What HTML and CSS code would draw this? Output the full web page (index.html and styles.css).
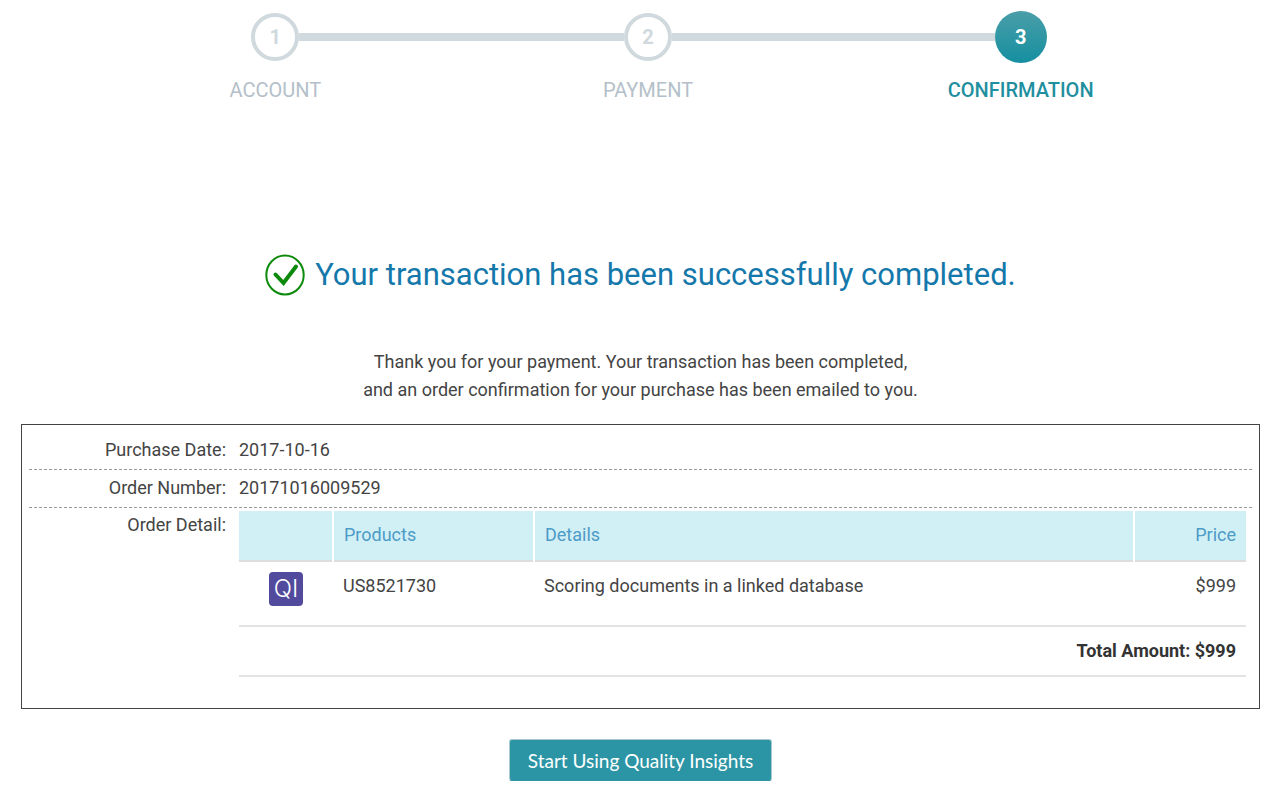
FILE: index.html
```html
<!DOCTYPE html>
<html lang="en">
  <head>
    <meta charset="UTF-8" />
    <meta name="viewport" content="width=device-width, initial-scale=1.0" />
    <title>Order Confirmation</title>
    <link rel="stylesheet" href="styles.css">
  </head>
  <body>
    <ol class="steps">
      <li class="step">
        <div class="marker"><span class="circle">1</span></div>
        <span class="step-name">ACCOUNT</span>
      </li>
      <li class="step">
        <div class="marker"><span class="circle">2</span></div>
        <span class="step-name">PAYMENT</span>
      </li>
      <li class="step active" aria-current="step">
        <div class="marker"><span class="circle">3</span></div>
        <span class="step-name">CONFIRMATION</span>
      </li>
    </ol>

    <main>
      <h1 class="title">
        <svg class="check" viewBox="0 0 40 42" aria-hidden="true">
          <ellipse cx="20" cy="21" rx="18.7" ry="19.5" />
          <path d="M10.5 20.5l8 8.5L31 12.5" />
        </svg>
        Your transaction has been successfully completed.
      </h1>

      <p class="message">
        Thank you for your payment. Your transaction has been completed,<br />
        and an order confirmation for your purchase has been emailed to you.
      </p>

      <dl class="order">
        <div class="row">
          <dt>Purchase Date:</dt>
          <dd>2017-10-16</dd>
        </div>
        <div class="row">
          <dt>Order Number:</dt>
          <dd>20171016009529</dd>
        </div>
        <div class="row detail">
          <dt>Order Detail:</dt>
          <dd>
            <table class="items">
              <thead>
                <tr>
                  <th class="col-icon"></th>
                  <th class="col-product">Products</th>
                  <th>Details</th>
                  <th class="col-price">Price</th>
                </tr>
              </thead>
              <tbody>
                <tr>
                  <td class="col-icon"><span class="logo">QI</span></td>
                  <td>US8521730</td>
                  <td>Scoring documents in a linked database</td>
                  <td class="col-price">$999</td>
                </tr>
              </tbody>
              <tfoot>
                <tr>
                  <td colspan="4">Total Amount: $999</td>
                </tr>
              </tfoot>
            </table>
          </dd>
        </div>
      </dl>

      <button type="button" class="start">Start Using Quality Insights</button>
    </main>
  </body>
</html>
```

FILE: styles.css
```css
* {
  box-sizing: border-box;
}

body {
  margin: 0;
  font-family: Roboto, "Liberation Sans", sans-serif;
  font-size: 18px;
  line-height: 28px;
  color: #444;
  background-color: #fff;
}

/* progress steps */
.steps {
  display: flex;
  margin: 0;
  padding: 10px 70px 0 89px;
  list-style: none;
}

.step {
  flex: 1;
  text-align: center;
  color: #b4c0c9;
}

.marker {
  display: flex;
  align-items: center;
  height: 54px;
}

.marker::before,
.marker::after {
  content: "";
  flex: 1;
  height: 8px;
  background-color: #d0d9dd;
}

.step:first-child .marker::before,
.step:last-child .marker::after {
  background: none;
}

.circle {
  width: 48px;
  height: 48px;
  border: 4px solid #d0d9dd;
  border-radius: 50%;
  font-size: 20px;
  font-weight: 700;
  line-height: 40px;
  color: #d0d9dd;
}

.step-name {
  display: block;
  margin-top: 12px;
  font-size: 20px;
}

.active .circle {
  width: 52px;
  height: 52px;
  border: none;
  line-height: 52px;
  color: #fff;
  background: linear-gradient(#4a9ea8, #158fa0);
}

.active .step-name {
  font-weight: 500;
  color: #1f8fa0;
}

main {
  padding: 0 17px 0 21px;
}

.title {
  display: flex;
  justify-content: center;
  align-items: center;
  gap: 10px;
  margin: 150px 0 0;
  font-size: 31px;
  font-weight: 400;
  line-height: 42px;
  color: #1478ab;
}

.check {
  width: 40px;
  height: 42px;
  fill: none;
  stroke: #0b8a0b;
  stroke-width: 2;
}

.check path {
  stroke-width: 4;
  stroke-linecap: round;
}

.message {
  margin: 52px 0 20px;
  text-align: center;
}

/* order summary */
.order {
  margin: 0;
  padding: 7px 7px 31px;
  border: 1px solid #444;
}

.row {
  display: flex;
  gap: 13px;
  padding: 4px 0 5px;
  border-bottom: 1px dashed #999;
}

.row dt {
  width: 197px;
  text-align: right;
}

.row dd {
  flex: 1;
  margin: 0;
}

.detail {
  padding: 3px 6px 0 0;
  border-bottom: none;
}

.items {
  width: 100%;
  border-collapse: collapse;
}

.items th,
.items td {
  padding: 10px;
  text-align: left;
  vertical-align: top;
}

.items th {
  height: 50px;
  border-right: 2px solid #fff;
  font-weight: 400;
  color: #4d9bc7;
  background-color: #d1f0f6;
}

.items th:last-child {
  border-right: none;
}

.items thead {
  border-bottom: 2px solid #ddd;
}

.items tbody tr,
.items tfoot tr {
  border-bottom: 2px solid #e3e3e3;
}

.items tbody td {
  height: 65px;
}

.items .col-icon {
  width: 94px;
  text-align: center;
}

.items .col-product {
  width: 201px;
}

.items .col-price {
  width: 112px;
  text-align: right;
}

.items tfoot td {
  text-align: right;
  font-weight: 700;
  color: #333;
}

.logo {
  display: inline-block;
  width: 34px;
  height: 34px;
  border-radius: 4px;
  font-family: Inter, sans-serif;
  font-size: 24px;
  font-weight: 300;
  line-height: 34px;
  color: #fff;
  background-color: #524b9d;
}

.start {
  display: block;
  margin: 30px auto 16px;
  padding: 7px 18px 5px;
  border: 1px solid #a9c9cd;
  border-bottom-color: #2c95a5;
  border-radius: 3px;
  font-family: Lato, sans-serif;
  font-size: 19px;
  line-height: 28px;
  color: #fff;
  background-color: #2c95a5;
  cursor: pointer;
}
```
